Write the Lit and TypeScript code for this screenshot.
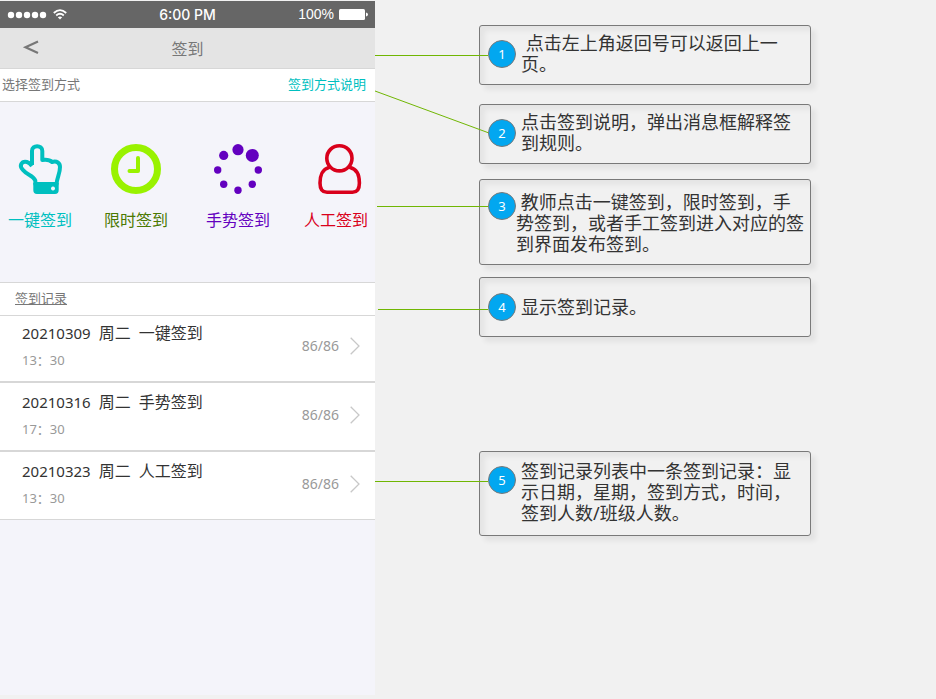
import { LitElement, html, svg, css } from "lit";
import { customElement, property } from "lit/decorators.js";

const CJK = css`"Noto Sans", "Noto Sans CJK SC", sans-serif`;

const icons = {
  hand: svg`
    <path d="M17 21V7C17 .5 27.300 .5 27.300 7V16C32 15.400 35 16 37 18C42 16.600 45 19 45 23C45 30 42 33 41.600 40H20.300V36.500C18 31 12 31 8 26C3.600 22 6.500 16.800 12 18C14 18.500 15.500 20 17 22"
      fill="none" stroke="currentColor" stroke-width="4" stroke-linejoin="round"/>
    <path fill-rule="evenodd" fill="currentColor" d="M18.300 39H43.700V46Q43.700 50 40 50H22Q18.300 50 18.300 46ZM38 42.600a2 2 0 1 0 .01 0Z"/>`,
  clock: svg`
    <circle cx="25" cy="25" r="21.500" fill="none" stroke="#99f200" stroke-width="7"/>
    <path d="M27 14V27H18.500" fill="none" stroke="#99f200" stroke-width="4" stroke-linecap="round" stroke-linejoin="round"/>`,
  dots: svg`<g fill="currentColor">
    <circle cx="25" cy="5.700" r="5.600"/><circle cx="39.300" cy="11.400" r="6.500"/>
    <circle cx="45.300" cy="26" r="3.700"/><circle cx="39.300" cy="40.300" r="3.700"/>
    <circle cx="25" cy="46.300" r="3.700"/><circle cx="10.700" cy="40.300" r="3.700"/>
    <circle cx="4.700" cy="26" r="3.700"/><circle cx="10.700" cy="11.400" r="4.600"/></g>`,
  person: svg`<g fill="none" stroke="currentColor" stroke-width="3.600" stroke-linecap="round">
    <circle cx="28.400" cy="14.300" r="12.600"/>
    <path d="M18 23.500C11.500 25 9 32 9 39C9 45 11 48.300 16 48.300H41.500C46 48.300 48.400 45 48.400 39C48.400 32 46 25 39 23.500"/></g>`,
};

const modes = [
  { label: "一键签到", tone: "teal", icon: icons.hand },
  { label: "限时签到", tone: "green", icon: icons.clock },
  { label: "手势签到", tone: "purple", icon: icons.dots },
  { label: "人工签到", tone: "red", icon: icons.person },
];

const records = [
  { date: "20210309", mode: "一键签到", time: "13：30", count: "86/86" },
  { date: "20210316", mode: "手势签到", time: "17：30", count: "86/86" },
  { date: "20210323", mode: "人工签到", time: "13：30", count: "86/86" },
];

const notes = [
  { kind: "", text: " 点击左上角返回号可以返回上一\n页。" },
  { kind: "second", text: "点击签到说明，弹出消息框解释签\n到规则。" },
  { kind: "third tall", text: " 教师点击一键签到，限时签到，手\n势签到，或者手工签到进入对应的签\n到界面发布签到。" },
  { kind: "fourth", text: "显示签到记录。" },
  { kind: "fifth tall", text: "签到记录列表中一条签到记录：显\n示日期，星期，签到方式，时间，\n签到人数/班级人数。" },
];

@customElement("phone-screen")
export class PhoneScreen extends LitElement {
  static styles = css`
    :host { display: flex; flex-direction: column; background: #f4f4fa; color: #333; font-family: ${CJK}; }
    button { border: 0; padding: 0; background: none; font: inherit; color: inherit; cursor: pointer; }
    .status { display: grid; grid-template-columns: 1fr auto 1fr; align-items: center; height: 27px; padding: 0 7px;
      background: #666; color: #fff; font: 500 14px/27px "Inter", sans-serif; }
    .signal { display: flex; align-items: center; gap: 5px; }
    .signal svg, .power svg { display: block; }
    .power { display: flex; align-items: center; justify-content: flex-end; gap: 5px; font: 14px/27px "Liberation Sans", sans-serif; }
    .bar { display: grid; grid-template-columns: 1fr auto 1fr; align-items: center; height: 40px; background: #e4e4e4;
      border-bottom: 1px solid #d7d7d7; color: #777; }
    .back { justify-self: start; padding: 0 20px; }
    .back svg { display: block; }
    .title { margin: 0; padding-top: 1px; font-size: 16px; line-height: 24px; font-weight: 400; }
    .choose { display: flex; justify-content: space-between; height: 32px; padding: 0 9px 0 2px; background: #fff;
      border-bottom: 1px solid #d7d7d7; font-size: 13px; line-height: 31px; color: #777; }
    .help { color: #00bfbf; text-decoration: none; }
    .modes { display: grid; grid-template-columns: 96fr 102fr 98fr 64fr; padding: 42px 7px 50px 8px; border-bottom: 1px solid #d7d7d7; }
    .mode { display: flex; flex-direction: column; align-items: center; gap: 14px; justify-self: start; white-space: nowrap;
      font-size: 16px; line-height: 24px; }
    .mode svg { display: block; overflow: visible; }
    .teal { color: #00bfbf; }
    .green { color: #4b7902; }
    .purple { color: #6300bf; }
    .red { color: #d9001b; }
    .heading { margin: 0; padding: 0 15px 2px; background: #fff; border-bottom: 1px solid #d7d7d7; color: #777;
      font-size: 13px; line-height: 30px; font-weight: 400; text-decoration: underline; }
    .list { margin: 0; padding: 0; list-style: none; }
    .item { background: #fff; border-bottom: 2px solid #d7d7d7; padding-top: 2px; }
    .item:first-child { padding-top: 0; }
    .item:last-child { border-bottom-width: 1px; }
    .record { display: flex; align-items: center; width: 100%; height: 65px; padding: 0 15px 0 22px; text-align: left; }
    .info { flex: 1; display: flex; flex-direction: column; gap: 4px; padding-bottom: 6px; }
    .name { display: flex; gap: 8px; font-size: 16px; line-height: 24px; }
    .date { font-size: 15px; }
    .time { font-size: 13px; line-height: 22px; color: #999; }
    .count { font-size: 14px; line-height: 20px; color: #999; padding: 0 11px 6px 0; }
    .chevron { display: block; margin-bottom: 6px; }
  `;

  render() {
    return html`
      <div class="status">
        <span class="signal">
          <svg width="41" height="8" fill="#fff" aria-hidden="true">
            ${[4, 12, 20, 28, 36].map((x) => svg`<circle cx=${x} cy="4" r="3.200"/>`)}
          </svg>
          <svg width="14" height="11" fill="none" stroke="#fff" stroke-width="1.800" aria-hidden="true">
            <path d="M.8 4Q7-1.800 13.200 4M3.200 6.500Q7 3 10.800 6.500"/><path d="M7 10.500L4.800 8.300Q7 6.500 9.200 8.300Z" fill="#fff" stroke="none"/>
          </svg>
        </span>
        <span>6:00 PM</span>
        <span class="power">100%
          <svg width="29" height="11" fill="#fff" aria-hidden="true"><rect width="26" height="11" rx="1.500"/><path d="M27 3.500Q29 4 29 5.500T27 7.500Z"/></svg>
        </span>
      </div>
      <header class="bar">
        <button class="back" aria-label="返回">
          <svg width="22" height="16" fill="none" stroke="#777" stroke-width="2.200" aria-hidden="true"><path d="M18 1.500L5.500 7.200L18 13"/></svg>
        </button>
        <h1 class="title">签到</h1>
      </header>
      <div class="choose"><span>选择签到方式</span><a class="help" href="#help">签到方式说明</a></div>
      <nav class="modes">
        ${modes.map((m) => html`
          <button class="mode ${m.tone}">
            <svg width="50" height="50" viewBox="0 0 50 50" aria-hidden="true">${m.icon}</svg>
            <span>${m.label}</span>
          </button>`)}
      </nav>
      <h2 class="heading">签到记录</h2>
      <ul class="list">
        ${records.map((r) => html`
          <li class="item">
            <button class="record">
              <span class="info">
                <span class="name"><span class="date">${r.date}</span><span>周二</span><span>${r.mode}</span></span>
                <span class="time">${r.time}</span>
              </span>
              <span class="count">${r.count}</span>
              <svg class="chevron" width="10" height="18" fill="none" stroke="#c8c8c8" stroke-width="1.300" aria-hidden="true"><path d="M.7 .7L9 9L.7 17.300"/></svg>
            </button>
          </li>`)}
      </ul>`;
  }
}

@customElement("note-card")
export class NoteCard extends LitElement {
  @property({ type: Number }) number = 0;
  @property() text = "";

  static styles = css`
    :host { display: flex; align-items: center; gap: 5px; box-sizing: border-box; width: 332px; min-height: 60px; padding: 0 4px 2px 8px;
      border: 1px solid #797979; border-radius: 3px; color: #333;
      box-shadow: 5px 5px 5px rgba(0, 0, 0, 0.06), inset 5px 5px 5px rgba(0, 0, 0, 0.05); font-family: ${CJK}; }
    :host(.tall) { min-height: 85px; }
    :host(.third) { gap: 0; min-height: 86px; padding-top: 5px; }
    :host(.fourth) { padding-bottom: 0; }
    .badge { position: relative; z-index: 1; flex: none; box-sizing: border-box; width: 28px; height: 28px; border: 1px solid #797979;
      border-radius: 50%; background: #02a7f0; color: #fff; text-align: center; font-size: 13px; line-height: 26px; }
    :host(.tall) .badge { align-self: flex-start; margin-top: 14px; }
    :host(.third) .badge { margin-top: 7px; }
    .text { margin: 0; font-size: 18px; line-height: 21px; white-space: pre; }
  `;

  render() {
    return html`<span class="badge">${this.number}</span><p class="text">${this.text}</p>`;
  }
}

@customElement("app-root")
export class AppRoot extends LitElement {
  static styles = css`
    :host { display: block; background: #f1f1f1; }
    .page { position: relative; display: flex; box-sizing: border-box; min-height: 100vh; padding: 1px 0 4px; }
    .phone { flex: 0 0 375px; }
    .notes { flex: 1; padding: 24px 0 0 104px; }
    .second { margin-top: 19px; }
    .third { margin-top: 15px; }
    .fourth { margin-top: 12px; }
    .fifth { margin-top: 114px; }
    .lines { position: absolute; top: 0; left: 375px; pointer-events: none; }
  `;

  render() {
    return html`
      <main class="page">
        <phone-screen class="phone"></phone-screen>
        <section class="notes">
          ${notes.map((n, i) => html`<note-card class=${n.kind} .number=${i + 1} .text=${n.text}></note-card>`)}
        </section>
        <svg class="lines" width="114" height="500" fill="none" stroke="#70b603" aria-hidden="true">
          <path d="M0 55.500H113M0 91L114 133M2 206.500H113M3 309.500H113M0 481.500H113"/>
        </svg>
      </main>`;
  }
}
